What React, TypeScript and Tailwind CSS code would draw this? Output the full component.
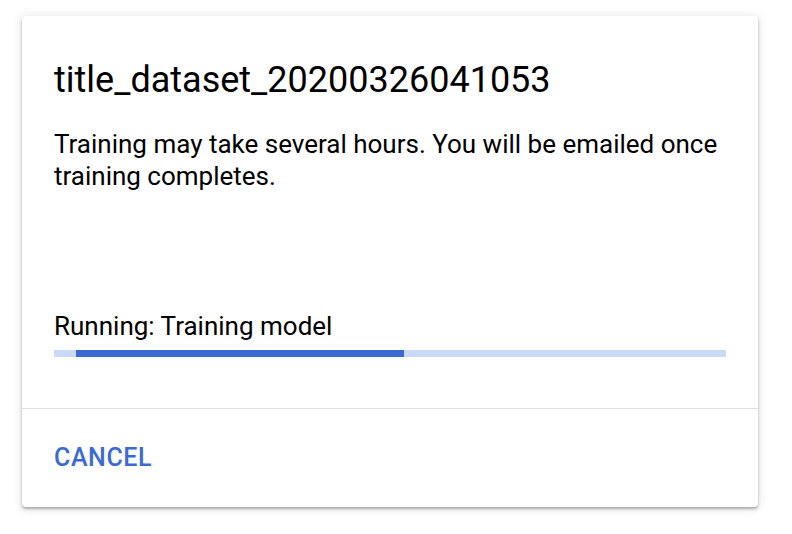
export default function App() {
	const progress = { start: 22, end: 350 };

	return (
		<div className="w-[792px] h-[534px] bg-white pt-4 pl-[22px]" style={{ fontFamily: 'Roboto, "Liberation Sans", sans-serif' }}>
			<div className="w-[736px] rounded-[4px] bg-white shadow-[0_2px_3px_rgba(0,0,0,0.3),0_1px_10px_2px_rgba(0,0,0,0.08)]">
				<div className="px-8 pt-[42px]">
					<h1 className="text-[36px] leading-[44px] text-black">title_dataset_20200326041053</h1>
					<p className="mt-[26px] text-[26px] leading-[32px] text-black">
						Training may take several hours. You will be emailed once training completes.
					</p>
					<div className="mt-[118px] text-[26px] leading-[32px] text-black">Running: Training model</div>
					<div className="relative mt-[8px] h-[7px] bg-[#c8daf7]">
						<div
							className="absolute top-0 h-full bg-[#3b6bd1]"
							style={{ left: progress.start, width: progress.end - progress.start }}
						/>
					</div>
				</div>
				<div className="mt-[51px] border-t border-[#e0e0e0]" />
				<div className="px-8 pt-[33px] pb-[33px]">
					<button className="text-[25px] leading-[32px] font-medium tracking-[0.6px] text-[#3b6ad3]">CANCEL</button>
				</div>
			</div>
		</div>
	);
}
